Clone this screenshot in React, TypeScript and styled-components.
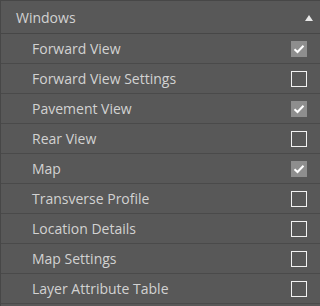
import React, { useState } from "react";
import styled, { createGlobalStyle } from "styled-components";

const GlobalStyle = createGlobalStyle`
  html, body {
    margin: 0;
    padding: 0;
    background: #585858;
  }
  body {
    font-family: "Open Sans", "Noto Sans", sans-serif;
  }
`;

const Panel = styled.div`
  width: 320px;
  height: 306px;
  box-sizing: border-box;
  background: #585858;
  border-left: 1px solid #474747;
  border-top: 1px solid #474747;
  overflow: hidden;
`;

const Header = styled.div`
  display: flex;
  align-items: center;
  justify-content: space-between;
  height: 33px;
  box-sizing: border-box;
  padding: 0 7px 0 15px;
  border-bottom: 1px solid #474747;
  color: #d2d2d2;
  font-size: 14px;
`;

const Caret = styled.span`
  width: 0;
  height: 0;
  border-left: 4px solid transparent;
  border-right: 4px solid transparent;
  border-bottom: 6px solid #e8e8e8;
  margin-top: 1px;
`;

const List = styled.div`
  display: flex;
  flex-direction: column;
`;

const Row = styled.label`
  display: flex;
  align-items: center;
  justify-content: space-between;
  height: 30px;
  box-sizing: border-box;
  padding: 0 13px 0 31px;
  border-bottom: 1px solid #4a4a4a;
  color: #d2d2d2;
  font-size: 14px;
  cursor: pointer;
`;

const Box = styled.span<{ $checked: boolean }>`
  width: 16px;
  height: 16px;
  box-sizing: border-box;
  display: flex;
  align-items: center;
  justify-content: center;
  background: ${(p) => (p.$checked ? "#8e8e8e" : "transparent")};
  border: ${(p) => (p.$checked ? "none" : "1px solid #f2f2f2")};
  margin-top: 1px;
`;

const items = [
  { name: "Forward View", on: true },
  { name: "Forward View Settings", on: false },
  { name: "Pavement View", on: true },
  { name: "Rear View", on: false },
  { name: "Map", on: true },
  { name: "Transverse Profile", on: false },
  { name: "Location Details", on: false },
  { name: "Map Settings", on: false },
  { name: "Layer Attribute Table", on: false },
];

export default function App() {
  const [state, setState] = useState(items.map((i) => i.on));

  const toggle = (idx: number) => {
    setState(state.map((v, i) => (i === idx ? !v : v)));
  };

  return (
    <>
      <GlobalStyle />
      <Panel>
        <Header>
          <span>Windows</span>
          <Caret />
        </Header>
        <List>
          {items.map((item, i) => (
            <Row key={item.name} onClick={() => toggle(i)}>
              <span>{item.name}</span>
              <Box $checked={state[i]}>
                {state[i] && (
                  <svg width="12" height="10" viewBox="0 0 12 10">
                    <path
                      d="M1.5 5.2 L4.5 8 L10.5 1.8"
                      fill="none"
                      stroke="#ffffff"
                      strokeWidth="2"
                    />
                  </svg>
                )}
              </Box>
            </Row>
          ))}
        </List>
      </Panel>
    </>
  );
}
